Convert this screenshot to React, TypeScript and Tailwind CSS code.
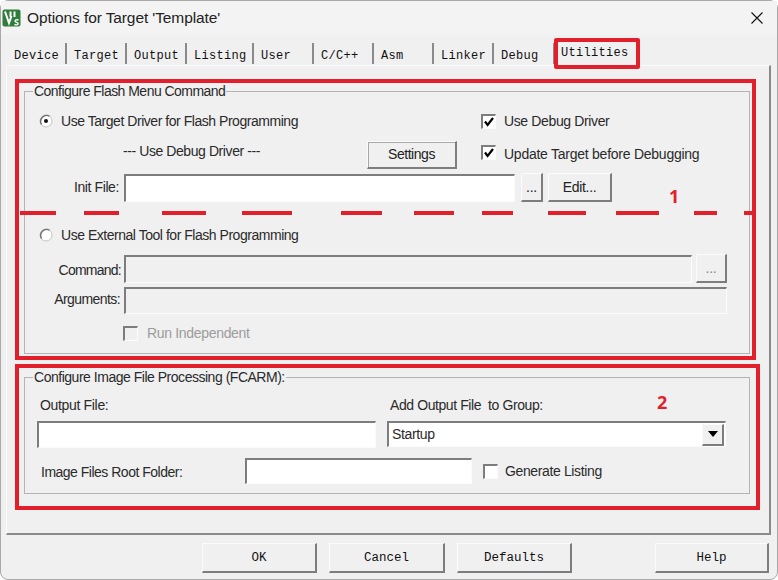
const sans = "font-['Liberation_Sans',Arial,sans-serif]";

const sunken = 'border-t-2 border-l-2 border-t-[#7d7d7d] border-l-[#7d7d7d] border-b border-r border-b-[#fbfbfb] border-r-[#fbfbfb]';
const raised = 'border-t border-l border-t-[#fbfbfb] border-l-[#fbfbfb] border-b-2 border-r-2 border-b-[#7d7d7d] border-r-[#7d7d7d] bg-[#f0f0f0]';

const tabs = [
  { label: 'Device', w: 'w-[60px]' },
  { label: 'Target', w: 'w-[60px]' },
  { label: 'Output', w: 'w-[60px]' },
  { label: 'Listing', w: 'w-[67px]' },
  { label: 'User', w: 'w-[60px]' },
  { label: 'C/C++', w: 'w-[60px]' },
  { label: 'Asm', w: 'w-[60px]' },
  { label: 'Linker', w: 'w-[60px]' },
  { label: 'Debug', w: 'w-[61px]' },
];

const dashes = [
  'left-[20px] w-[36px]',
  'left-[84px] w-[35px]',
  'left-[162px] w-[44px]',
  'left-[242px] w-[50px]',
  'left-[341px] w-[41px]',
  'left-[414px] w-[40px]',
  'left-[482px] w-[31px]',
  'left-[548px] w-[38px]',
  'left-[616px] w-[43px]',
  'left-[694px] w-[23px]',
  'left-[744px] w-[12px]',
];

const Radio = ({ checked = false }: { checked?: boolean }) => (
  <svg width="14" height="14" viewBox="0 0 14 14" className="shrink-0">
    <circle cx="7" cy="7" r="6" fill="#fff" stroke="#c4c4c4" />
    <path d="M2.5 10.5A6 6 0 0 1 10.5 2.2" fill="none" stroke="#6f6f6f" strokeWidth="1.4" />
    {checked && <circle cx="7" cy="7" r="2" fill="#111" />}
  </svg>
);

const Check = ({ checked = false, disabled = false }: { checked?: boolean; disabled?: boolean }) => (
  <div className={`w-[15px] h-[15px] shrink-0 ${sunken} ${disabled ? 'bg-[#f0f0f0]' : 'bg-white'}`}>
    {checked && (
      <svg width="12" height="12" viewBox="0 0 12 12">
        <path d="M2 5.5L4.6 9L10 2" fill="none" stroke="#000" strokeWidth="2.2" />
      </svg>
    )}
  </div>
);

const Legend = ({ children, className }: { children: string; className: string }) => (
  <legend className={`ml-[8px] px-px text-[14px] leading-[16px] text-[#2a2a2a] ${className}`}>{children}</legend>
);

const Btn = ({ children, className }: { children: string; className: string }) => (
  <button className={`flex items-center justify-center shrink-0 text-[14px] tracking-[-0.3px] text-[#222] ${raised} ${className}`}>{children}</button>
);

const FootBtn = ({ children, className = '' }: { children: string; className?: string }) => (
  <button className={`h-[30px] pt-px shrink-0 flex items-center justify-center font-['Liberation_Mono',monospace] text-[12.5px] text-[#111] ${raised} ${className}`}>{children}</button>
);

export default function App() {
  return (
    <div className={`relative w-[778px] h-[580px] overflow-hidden bg-white ${sans}`}>
      <div className="w-[778px] h-[580px] flex flex-col rounded-[8px] border border-[#a9a9a9] bg-[#f0f0f0]">
        {/* title bar */}
        <div className="h-[34px] shrink-0 flex items-center pl-[1px] pr-[14px] bg-[#f3f3f3]">
          <svg width="19" height="18" viewBox="0 0 19 18" className="shrink-0">
            <rect x="0.5" y="0.5" width="18" height="17" rx="2" fill="#2f7d3a" />
            <path d="M3 2.5L7 14L9.5 7M8.5 2.5V8M12.5 2.5V8" fill="none" stroke="#fff" strokeWidth="2" />
            <path d="M16.5 11C14.5 10.3 13 10.8 13.1 12.2C13.3 13.6 16.1 13.2 16.1 14.7C16.1 16 14.1 16.2 12.5 15.5" fill="none" stroke="#fff" strokeWidth="1.4" />
          </svg>
          <span className="ml-[6px] text-[15.5px] tracking-[-0.1px] text-[#222]">Options for Target 'Template'</span>
          <svg width="12" height="12" viewBox="0 0 12 12" className="ml-auto">
            <path d="M0.5 0.5L11.5 11.5M11.5 0.5L0.5 11.5" stroke="#111" strokeWidth="1.1" />
          </svg>
        </div>

        {/* tab strip */}
        <div className="h-[30px] shrink-0 flex items-end pl-[6px]">
          {tabs.map(t => (
            <div key={t.label} className={`${t.w} h-[21px] mb-[1px] pt-[4px] flex items-center pl-[7px] border-r-2 border-r-[#8a8a8a] font-['Liberation_Mono',monospace] text-[12px] tracking-[0.3px] text-[#111]`}>{t.label}</div>
          ))}
          <div className="w-[82px] h-[26px] mb-[2px] pl-[6px] pt-[9px] font-['Liberation_Mono',monospace] text-[12px] leading-[14px] tracking-[0.3px] text-[#111]">Utilities</div>
        </div>

        {/* tab panel */}
        <div className="h-[470px] w-[765px] shrink-0 ml-[5px] border-t border-l border-t-[#fbfbfb] border-l-[#fbfbfb] border-r-2 border-b-2 border-r-[#8a8a8a] border-b-[#8a8a8a] pl-[17px] pt-[17px]">
          <fieldset className="w-[726px] h-[271px] border border-[#b4b4b4] text-[14px] tracking-[-0.25px] text-[#2a2a2a]">
            <Legend className="tracking-[-0.53px]">Configure Flash Menu Command</Legend>
            <div className="pl-[14px] pt-[14px] flex flex-col">
              <div className="h-[16px] flex items-center">
                <div className="w-[442px] flex items-center">
                  <Radio checked />
                  <span className="ml-[8px] tracking-[-0.46px]">Use Target Driver for Flash Programming</span>
                </div>
                <Check checked />
                <span className="ml-[8px] tracking-[-0.37px]">Use Debug Driver</span>
              </div>
              <div className="h-[28px] mt-[12px] flex items-start">
                <span className="ml-[84px] w-[244px] tracking-[-0.42px]">--- Use Debug Driver ---</span>
                <Btn className="w-[90px] h-[28px] tracking-[-0.45px] shadow-[inset_1px_1px_0_#a8a8a8]">Settings</Btn>
                <div className="ml-[24px] mt-[4px]"><Check checked /></div>
                <span className="ml-[8px] mt-[3px]">Update Target before Debugging</span>
              </div>
              <div className="h-[29px] mt-[4px] flex items-center">
                <span className="w-[85px] text-right pr-[5px] tracking-[-0.4px]">Init File:</span>
                <div className={`w-[391px] h-[28px] bg-white ${sunken}`} />
                <Btn className="w-[22px] h-[29px] ml-[6px]">...</Btn>
                <Btn className="w-[64px] h-[29px] ml-[5px]">Edit...</Btn>
              </div>
              <div className="h-[16px] mt-[25px] flex items-center">
                <Radio />
                <span className="ml-[8px] tracking-[-0.47px]">Use External Tool for Flash Programming</span>
              </div>
              <div className="h-[29px] mt-[11px] flex items-center">
                <span className="w-[85px] text-right pr-[3px] mt-[3px] tracking-[-0.75px]">Command:</span>
                <div className={`w-[568px] h-[28px] ${sunken}`} />
                <Btn className="w-[31px] h-[29px] ml-[4px] text-[#888]">...</Btn>
              </div>
              <div className="h-[27px] mt-[4px] flex items-center">
                <span className="w-[85px] text-right pr-[4px] mb-[3px] tracking-[-0.58px]">Arguments:</span>
                <div className={`w-[603px] h-[27px] ${sunken}`} />
              </div>
              <div className="h-[17px] mt-[11px] flex items-center pl-[84px]">
                <Check disabled />
                <span className="ml-[9px] tracking-[-0.32px] text-[#9c9c9c]">Run Independent</span>
              </div>
            </div>
          </fieldset>

          <fieldset className="w-[726px] h-[125px] mt-[15px] border border-[#b4b4b4] text-[14px] tracking-[-0.25px] text-[#2a2a2a]">
            <Legend className="tracking-[-0.48px]">Configure Image File Processing (FCARM):</Legend>
            <div className="flex flex-col pl-[12px]">
              <div className="h-[16px] mt-[12px] flex items-center">
                <span className="ml-[3px] w-[350px] tracking-[-0.33px]">Output File:</span>
                <span className="tracking-[-0.41px]">Add Output File&nbsp; to Group:</span>
              </div>
              <div className="h-[27px] mt-[8px] flex items-start">
                <div className={`w-[339px] h-[27px] bg-white ${sunken}`} />
                <div className={`w-[339px] h-[26px] ml-[11px] flex items-center justify-between pr-px bg-white ${sunken}`}>
                  <span className="pl-[3px] tracking-[-0.35px]">Startup</span>
                  <div className={`w-[22px] h-[22px] flex items-center justify-center ${raised}`}>
                    <svg width="10" height="6" viewBox="0 0 10 6"><path d="M0 0H10L5 6Z" fill="#000" /></svg>
                  </div>
                </div>
              </div>
              <div className="h-[26px] mt-[10px] flex items-center">
                <span className="ml-[4px] w-[204px] mt-[3px] tracking-[-0.5px]">Image Files Root Folder:</span>
                <div className={`w-[227px] h-[26px] bg-white ${sunken}`} />
                <div className="ml-[11px]"><Check /></div>
                <span className="ml-[7px] tracking-[-0.37px]">Generate Listing</span>
              </div>
            </div>
          </fieldset>
        </div>

        {/* footer buttons */}
        <div className="flex pl-[201px] pt-[8px]">
          <FootBtn className="w-[115px]">OK</FootBtn>
          <FootBtn className="w-[116px] ml-[12px]">Cancel</FootBtn>
          <FootBtn className="w-[115px] ml-[12px]">Defaults</FootBtn>
          <FootBtn className="w-[114px] ml-[83px]">Help</FootBtn>
        </div>
      </div>

      {/* red annotations drawn over the screenshot */}
      <div className="absolute left-[554px] top-[38px] w-[86px] h-[31px] rounded-[2px] border-[4px] border-[#e2202c]" />
      <div className="absolute left-[15px] top-[79px] w-[741px] h-[281px] border-[4px] border-[#e2202c]" />
      <div className="absolute left-[15px] top-[364px] w-[745px] h-[146px] border-[4px] border-[#e2202c]" />
      {dashes.map(d => (
        <div key={d} className={`absolute top-[211px] h-[4px] bg-[#e2202c] ${d}`} />
      ))}
      <span className="absolute left-[669px] top-[186px] text-[18px] leading-[20px] font-bold font-['Open_Sans',sans-serif] text-[#e2202c]">1</span>
      <span className="absolute left-[657px] top-[392px] text-[18px] leading-[20px] font-bold font-['Open_Sans',sans-serif] text-[#e2202c]">2</span>
    </div>
  );
}
